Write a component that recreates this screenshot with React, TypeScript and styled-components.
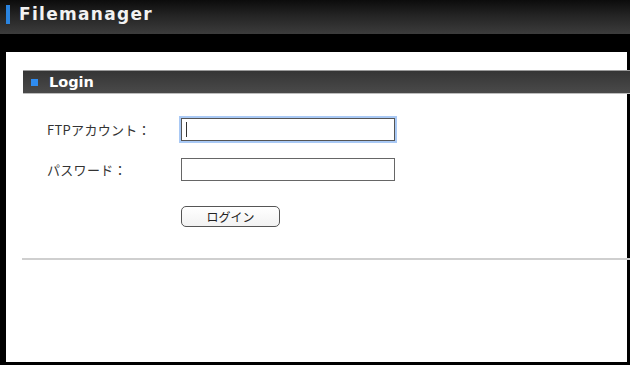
import React from 'react';
import styled, { createGlobalStyle } from 'styled-components';

const GlobalStyle = createGlobalStyle`
  html, body {
    margin: 0;
    padding: 0;
    background: #000;
    height: 100%;
  }
  #root {
    height: 100%;
  }
`;

const Page = styled.div`
  display: flex;
  flex-direction: column;
  height: 365px;
  background: #000;
  font-family: "Noto Sans CJK JP", "DejaVu Sans", sans-serif;
`;

const Header = styled.header`
  display: flex;
  align-items: center;
  gap: 9px;
  height: 34px;
  padding: 0 0 6px 6px;
  box-sizing: border-box;
  background: linear-gradient(to bottom, #0c0c0c 0%, #262626 50%, #3c3c3c 100%);
`;

const BlueBar = styled.span`
  width: 4px;
  height: 19px;
  background: #2a84e0;
`;

const Title = styled.h1`
  margin: 0;
  color: #f2f2f2;
  font-family: "DejaVu Sans", sans-serif;
  font-weight: bold;
  font-size: 17px;
  letter-spacing: 1.3px;
`;

const Body = styled.main`
  flex: 1;
  display: flex;
  padding: 18px 3px 3px 6px;
  min-height: 0;
`;

const Panel = styled.section`
  flex: 1;
  background: #fff;
  padding: 18px 0 0 17px;
  box-sizing: border-box;
`;

const SectionBar = styled.div`
  display: flex;
  align-items: center;
  gap: 11px;
  height: 24px;
  padding-left: 8px;
  box-sizing: border-box;
  background: linear-gradient(to bottom, #353535, #4a4a4a);
  border-top: 1px solid #9a9a9a;
  border-bottom: 1px solid #bdbdbd;
  margin-right: -3px;
`;

const BlueSquare = styled.span`
  width: 7px;
  height: 7px;
  background: #2f8cf0;
`;

const SectionTitle = styled.h2`
  margin: 0;
  color: #fff;
  font-family: "DejaVu Sans", sans-serif;
  font-weight: bold;
  font-size: 14.5px;
`;

const Form = styled.form`
  display: grid;
  grid-template-columns: 134px 214px;
  row-gap: 17px;
  align-items: center;
  padding: 24px 0 0 24px;
`;

const Label = styled.label`
  font-size: 13px;
  color: #333;
  letter-spacing: 0.3px;
`;

const Input = styled.input<{ $focused?: boolean }>`
  display: block;
  width: 214px;
  height: 23px;
  box-sizing: border-box;
  border: 1px solid ${(p) => (p.$focused ? '#555' : '#666')};
  border-radius: 0;
  padding: 2px 4px;
  font-size: 13px;
  outline: none;
  box-shadow: ${(p) => (p.$focused ? '0 0 0 2px #a9c9f5' : 'none')};
`;

const Button = styled.button`
  grid-column: 2;
  justify-self: start;
  width: 99px;
  height: 21px;
  margin-top: 8px;
  border: 1px solid #555;
  border-radius: 5px;
  background: linear-gradient(to bottom, #ffffff, #f2f2f2);
  font-family: "Noto Sans CJK JP", sans-serif;
  font-size: 12px;
  color: #222;
  padding: 0;
`;

const Divider = styled.hr`
  margin: 31px -3px 0 -1px;
  border: none;
  height: 2px;
  background: #cfcfcf;
`;

const Caret = styled.span`
  display: block;
  width: 1px;
  height: 15px;
  background: #333;
`;

const FieldWrap = styled.div`
  position: relative;
  width: 214px;
  height: 23px;
`;

const CaretHolder = styled.div`
  position: absolute;
  left: 5px;
  top: 4px;
`;

export default function App() {
  return (
    <>
      <GlobalStyle />
      <Page>
        <Header>
          <BlueBar />
          <Title>Filemanager</Title>
        </Header>
        <Body>
          <Panel>
            <SectionBar>
              <BlueSquare />
              <SectionTitle>Login</SectionTitle>
            </SectionBar>
            <Form onSubmit={(e) => e.preventDefault()}>
              <Label htmlFor="ftp-account">FTPアカウント：</Label>
              <FieldWrap>
                <Input id="ftp-account" type="text" $focused />
                <CaretHolder>
                  <Caret />
                </CaretHolder>
              </FieldWrap>
              <Label htmlFor="ftp-password">パスワード：</Label>
              <Input id="ftp-password" type="password" />
              <Button type="submit">ログイン</Button>
            </Form>
            <Divider />
          </Panel>
        </Body>
      </Page>
    </>
  );
}
